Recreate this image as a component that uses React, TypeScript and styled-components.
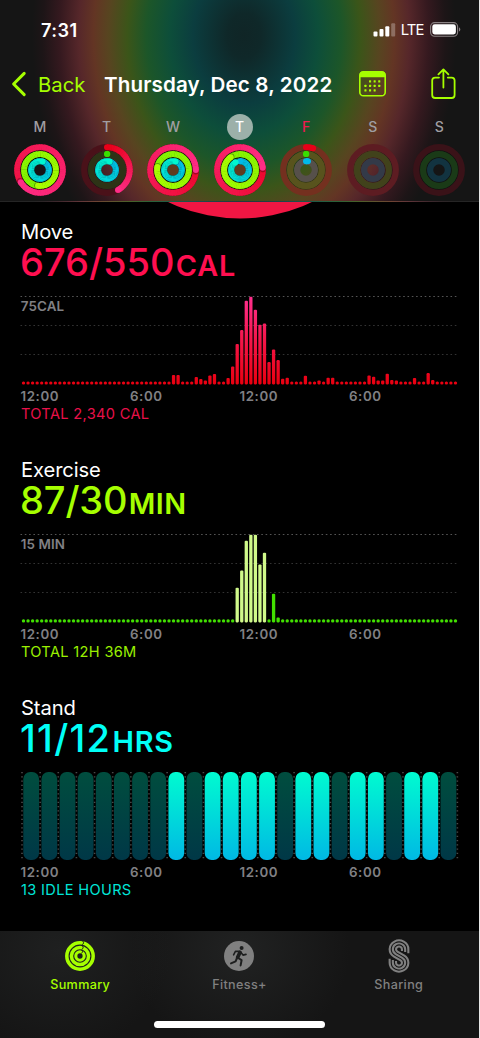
import React from 'react';
import styled, { createGlobalStyle } from 'styled-components';

const GlobalStyle = createGlobalStyle`
  * { box-sizing: border-box; }
  body { margin: 0; background: #000; font-family: Inter, "Liberation Sans", sans-serif; }
`;

const LIME = '#a6ff00';

const Screen = styled.div`
  width: 480px;
  height: 1038px;
  display: flex;
  flex-direction: column;
  overflow: hidden;
  background: #000;
  border-right: 1px solid #e6e6e6;
`;

const Header = styled.header`
  flex: none;
  height: 202px;
  border-bottom: 1px solid rgba(255, 255, 255, 0.07);
  background: radial-gradient(
    ellipse 212px 282px at 244px 36px,
    #102526 0%, #0f2829 8%, #0b3d3f 24%, #0d4e3a 35%, #1c5629 46%, #3b5519 55%,
    #574520 64%, #633524 71%, #56272a 78%, #35191f 87%, #1d1517 95%, #151515 100%
  );
`;

const StatusBar = styled.div`
  display: flex;
  align-items: center;
  height: 59px;
  padding: 0 18.5px 0 41px;
  color: #fff;
`;

const Clock = styled.span`
  flex: 1;
  font-size: 18.2px;
  font-weight: 600;
  letter-spacing: 0.4px;
`;

const Carrier = styled.span`
  margin: 0 6px 0 5px;
  font-size: 14.8px;
  letter-spacing: -0.9px;
`;

const NavBar = styled.nav`
  display: flex;
  align-items: center;
  height: 50px;
  padding-left: 11px;
`;

const BackLabel = styled.span`
  box-sizing: content-box;
  width: 66px;
  padding-left: 11px;
  font-size: 20.3px;
  letter-spacing: 0;
  color: ${LIME};
`;

const Title = styled.h1`
  margin: 0;
  width: 255px;
  font-size: 20.6px;
  font-weight: 600;
  letter-spacing: 0.13px;
  color: #fff;
  white-space: nowrap;
`;

const ShareSlot = styled.span`
  display: flex;
  margin-left: 44.5px;
`;

const Week = styled.div`
  display: grid;
  grid-template-columns: repeat(7, 66.55px);
  padding: 4.5px 0 0 6.7px;
`;

const Day = styled.div`
  display: flex;
  flex-direction: column;
  align-items: center;
  gap: 3.5px;
`;

const DayLetter = styled.span<{ $selected?: boolean; $today?: boolean }>`
  display: flex;
  align-items: center;
  justify-content: center;
  width: 26px;
  height: 26px;
  border-radius: 50%;
  font-size: 14px;
  font-weight: 500;
  background: ${(p) => (p.$selected ? '#9cb0a9' : 'transparent')};
  color: ${(p) => (p.$selected ? '#fff' : p.$today ? '#f0194f' : '#a09ea2')};
`;

const Main = styled.main`
  flex: 1;
  min-height: 0;
  overflow: hidden;
`;

const ArcStrip = styled.svg`
  display: block;
`;

const Section = styled.section`
  height: 238px;
`;

const SectionTitle = styled.h2`
  margin: 0;
  padding-left: 21px;
  font-size: 20.2px;
  line-height: 23px;
  height: 24px;
  font-weight: 400;
  letter-spacing: -0.1px;
  color: #fff;
`;

const Value = styled.div<{ $color: string; $spacing: number }>`
  padding-left: 20px;
  height: 37px;
  font-size: 38px;
  line-height: 37px;
  font-weight: 500;
  letter-spacing: ${(p) => p.$spacing}px;
  color: ${(p) => p.$color};
  white-space: nowrap;
`;

const Unit = styled.span<{ $spacing: number }>`
  margin-left: 1.2px;
  font-size: 28.8px;
  font-weight: 600;
  letter-spacing: ${(p) => p.$spacing}px;
`;

const Chart = styled.svg`
  display: block;
  font-size: 13.4px;
  font-weight: 600;
`;

const Axis = styled.div`
  display: grid;
  grid-template-columns: repeat(4, 109.5px);
  padding-left: 20.5px;
  font-size: 13.3px;
  line-height: 17px;
  height: 18px;
  font-weight: 600;
  letter-spacing: 0.6px;
  color: #808084;
`;

const Total = styled.div<{ $color: string }>`
  padding-left: 21px;
  font-size: 14.6px;
  line-height: 16px;
  letter-spacing: 0.33px;
  color: ${(p) => p.$color};
`;

const TabBar = styled.footer`
  flex: none;
  height: 107px;
  display: flex;
  flex-direction: column;
  justify-content: space-between;
  align-items: center;
  padding-bottom: 10px;
  background:
    radial-gradient(ellipse 110px 100px at 60px 20px, #1f2020, transparent),
    radial-gradient(ellipse 110px 100px at 240px 20px, #212222, transparent),
    #151515;
`;

const Tabs = styled.div`
  display: grid;
  grid-template-columns: repeat(3, 159.3px);
`;

const Tab = styled.div<{ $active?: boolean }>`
  display: flex;
  flex-direction: column;
  align-items: center;
  padding-top: 7px;
  font-size: 12.6px;
  line-height: 18px;
  font-weight: 500;
  letter-spacing: 0.35px;
  color: ${(p) => (p.$active ? LIME : '#808080')};
  svg { margin-bottom: 2px; }
`;

const HomeIndicator = styled.div`
  width: 171px;
  height: 7px;
  border-radius: 4px;
  background: #fff;
`;

type RGB = [number, number, number];
const mix = (a: RGB, b: RGB, t: number) =>
  `rgb(${a.map((v, i) => Math.round(v + (b[i] - v) * t)).join(',')})`;

const point = (r: number, turn: number) => {
  const a = turn * Math.PI * 2;
  return [27 + r * Math.sin(a), 27 - r * Math.cos(a)];
};

interface RingProps { r: number; turns: number; from: RGB; to: RGB; track: string }

function Ring({ r, turns, from, to, track }: RingProps) {
  const start = Math.max(0, turns - 1);
  const steps = Math.max(1, Math.ceil((turns - start) * 60));
  const end: RGB = turns < 0.1 ? from : to;
  const parts = Array.from({ length: steps }, (_, i) => {
    const t0 = start + ((turns - start) * i) / steps;
    const t1 = start + ((turns - start) * (i + 1)) / steps + (i < steps - 1 ? 0.004 : 0);
    const [x0, y0] = point(r, t0);
    const [x1, y1] = point(r, t1);
    return (
      <path key={i} d={`M${x0} ${y0}A${r} ${r} 0 0 1 ${x1} ${y1}`} fill="none"
        stroke={mix(from, end, turns ? t0 / turns : 0)} strokeWidth={6} />
    );
  });
  const [sx, sy] = point(r, 0);
  const [ex, ey] = point(r, turns);
  const [hx, hy] = point(r, turns + 0.01);
  return (
    <g>
      <circle cx={27} cy={27} r={r} fill="none" stroke={track} strokeWidth={6.2} />
      {turns > 0 && (
        <>
          {turns < 1 && <circle cx={sx} cy={sy} r={3} fill={mix(from, end, 0)} />}
          {parts}
          {turns >= 1 && <circle cx={hx} cy={hy} r={3} fill="rgba(0,0,0,0.3)" />}
          <circle cx={ex} cy={ey} r={3} fill={mix(from, end, 1)} />
        </>
      )}
    </g>
  );
}

interface DayData {
  letter: string; move: number; exercise: number; stand: number;
  tracks: [string, string, string]; selected?: boolean; today?: boolean;
}

const days: DayData[] = [
  { letter: 'M', move: 1.66, exercise: 2.52, stand: 1.05, tracks: ['#3d1018', '#22300f', '#0c2c33'] },
  { letter: 'T', move: 0.42, exercise: 0.003, stand: 1.05, tracks: ['#4a1119', '#2d3316', '#0c2c33'] },
  { letter: 'W', move: 1.25, exercise: 2.78, stand: 1.05, tracks: ['#4a1119', '#2d3316', '#0c2c33'] },
  { letter: 'T', move: 1.235, exercise: 2.9, stand: 0.917, tracks: ['#5a2a19', '#3d5316', '#1c4c43'], selected: true },
  { letter: 'F', move: 0.05, exercise: 0.003, stand: 0.035, tracks: ['#74301f', '#58531d', '#56504a'], today: true },
  { letter: 'S', move: 0, exercise: 0, stand: 0, tracks: ['#5d1c22', '#41421b', '#333a48'] },
  { letter: 'S', move: 0, exercise: 0, stand: 0, tracks: ['#3a1218', '#1a3a17', '#123340'] },
];

function Rings({ day }: { day: DayData }) {
  return (
    <svg width={54} height={54} viewBox="0 0 54 54">
      {day.move >= 1 && <circle cx={27} cy={27} r={20} fill="rgba(0,0,0,0.72)" />}
      {day.move >= 1 && <circle cx={27} cy={27} r={6} fill={day.letter === 'M' ? '#161416' : '#5f3b20'} />}
      <circle cx={27} cy={27} r={19.3} fill="none" stroke="rgba(10,10,10,0.5)" strokeWidth={0.9} />
      <circle cx={27} cy={27} r={12.3} fill="none" stroke="rgba(10,10,10,0.5)" strokeWidth={0.9} />
      <Ring r={22.8} turns={day.move} from={[232, 0, 24]} to={[255, 45, 135]} track={day.tracks[0]} />
      <Ring r={15.9} turns={day.exercise} from={[56, 222, 0]} to={[170, 255, 0]} track={day.tracks[1]} />
      <Ring r={8.85} turns={day.stand} from={[0, 186, 232]} to={[0, 246, 208]} track={day.tracks[2]} />
    </svg>
  );
}

const SLOTS = 96;
const PITCH = 4.547;

const series = (values: Record<number, number>, rest: number) =>
  Array.from({ length: SLOTS }, (_, i) => values[i] ?? rest);

const moveBars = series({
  33: 9.5, 34: 9.5, 38: 7.5, 39: 5.5, 40: 4, 41: 9, 42: 10.5, 45: 6.5, 46: 18, 47: 40.5,
  48: 54.3, 49: 83.7, 50: 87.7, 51: 74.7, 52: 59.7, 53: 61, 54: 22.3, 55: 35, 56: 24.3,
  57: 5.7, 58: 6.7, 62: 8.7, 65: 4, 67: 6.7, 68: 6.7, 76: 9, 77: 7.7, 78: 4, 79: 4,
  80: 10.7, 81: 4.5, 82: 3.8, 86: 6.5, 89: 11.3, 90: 4.3,
}, 3);

const exerciseBars = series({
  47: 34.7, 48: 52, 49: 81.7, 50: 87.7, 51: 87.7, 52: 58, 53: 69.7, 55: 28.7, 56: 5,
}, 3.2);

function GridLines() {
  return (
    <g strokeWidth={1} strokeDasharray="1.6 2.7">
      <line x1={20.5} x2={457} y1={15.5} y2={15.5} stroke="#555" />
      <line x1={20.5} x2={457} y1={44.5} y2={44.5} stroke="#333" />
      <line x1={20.5} x2={457} y1={73.5} y2={73.5} stroke="#333" />
    </g>
  );
}

function BarChart({ bars, label, fill }: { bars: number[]; label: string; fill: (h: number) => string }) {
  return (
    <Chart width={479} height={107} viewBox="0 0 479 107">
      <defs>
        <linearGradient id="move" gradientUnits="userSpaceOnUse" x1="0" y1="15" x2="0" y2="103">
          <stop offset="0" stopColor="#ff3090" />
          <stop offset="0.45" stopColor="#f5184f" />
          <stop offset="1" stopColor="#ea0010" />
        </linearGradient>
      </defs>
      <GridLines />
      <text x={20.8} y={29.8} fill="#808084" letterSpacing={0.1}>{label}</text>
      {bars.map((h, i) => (
        <rect key={i} x={23.5 + i * PITCH - 1.65} y={103.4 - h} width={3.3} height={h}
          rx={h < 3.5 ? 1.5 : 1.1} fill={fill(h)} />
      ))}
    </Chart>
  );
}

const STAND_PITCH = 18.14;
const standing = new Set([8, 10, 11, 12, 13, 15, 16, 18, 19, 21, 22]);

function StandChart() {
  return (
    <Chart width={479} height={107} viewBox="0 0 479 107">
      <defs>
        <linearGradient id="lit" x1="0" y1="0" x2="0" y2="1">
          <stop offset="0" stopColor="#00fbd0" />
          <stop offset="1" stopColor="#00b9e4" />
        </linearGradient>
        <linearGradient id="idle" x1="0" y1="0" x2="0" y2="1">
          <stop offset="0" stopColor="#004d3e" />
          <stop offset="1" stopColor="#003847" />
        </linearGradient>
      </defs>
      {Array.from({ length: 25 }, (_, i) => (
        <line key={i} x1={22 + i * STAND_PITCH} x2={22 + i * STAND_PITCH} y1={15} y2={103}
          stroke="#4a4a4a" strokeWidth={1.6} strokeDasharray="1.2 3.05" />
      ))}
      {Array.from({ length: 24 }, (_, i) => (
        <rect key={i} x={23.3 + i * STAND_PITCH} y={15} width={15.8} height={88} rx={7}
          fill={standing.has(i) ? 'url(#lit)' : 'url(#idle)'} />
      ))}
    </Chart>
  );
}

interface MetricProps {
  title: string; value: string; unit: string; color: string; spacing: number; unitSpacing: number;
  total: string; totalColor: string; children: React.ReactNode;
}

function Metric({ title, value, unit, color, spacing, unitSpacing, total, totalColor, children }: MetricProps) {
  return (
    <Section>
      <SectionTitle>{title}</SectionTitle>
      <Value $color={color} $spacing={spacing}>{value}<Unit $spacing={unitSpacing}>{unit}</Unit></Value>
      {children}
      <Axis><span>12:00</span><span>6:00</span><span>12:00</span><span>6:00</span></Axis>
      <Total $color={totalColor}>{total}</Total>
    </Section>
  );
}

function StatusIcons() {
  return (
    <svg width={23} height={16} viewBox="0 0 23 16" fill="#fff">
      <rect x={0.5} y={9.5} width={4} height={5} rx={1} />
      <rect x={6.5} y={7} width={4} height={7.5} rx={1} />
      <rect x={12.3} y={4.2} width={4} height={10.3} rx={1} />
      <rect x={18.2} y={1.2} width={4} height={13.3} rx={1} opacity={0.28} />
    </svg>
  );
}

function Battery() {
  return (
    <svg width={31} height={15} viewBox="0 0 31 15">
      <rect x={0.6} y={0.6} width={27} height={13.6} rx={4} fill="none" stroke="#8a8284" strokeWidth={1.1} />
      <rect x={2.3} y={2.3} width={23.6} height={10.2} rx={2.4} fill="#fff" />
      <path d="M29 5.2c1.8.7 1.8 3.7 0 4.4z" fill="#8a8284" />
    </svg>
  );
}

function CalendarIcon() {
  const dots = [[11, 10.3], [15.6, 10.3], [20.2, 10.3], [6.4, 14.8], [11, 14.8], [15.6, 14.8], [20.2, 14.8], [6.4, 19.3], [11, 19.3], [15.6, 19.3]];
  return (
    <svg width={27} height={26} viewBox="0 0 27 26" fill={LIME}>
      <rect x={0.8} y={0.8} width={25.4} height={24} rx={3.6} fill="none" stroke={LIME} strokeWidth={1.6} />
      <path d="M0.5 6.3V4A3.6 3.6 0 0 1 4 .4H23A3.6 3.6 0 0 1 26.6 4V6.3Z" />
      {dots.map(([x, y], i) => <rect key={i} x={x - 1} y={y - 1} width={2.1} height={2.1} rx={0.5} />)}
    </svg>
  );
}

function ShareIcon() {
  return (
    <svg width={25} height={33} viewBox="0 0 25 33" fill="none" stroke={LIME} strokeWidth={1.8} strokeLinecap="round" strokeLinejoin="round">
      <path d="M8 9.6H4.2A3 3 0 0 0 1.2 12.6V27A3 3 0 0 0 4.2 30H20.6A3 3 0 0 0 23.6 27V12.6A3 3 0 0 0 20.6 9.6H16.8" />
      <path d="M12.4 19.6V1.6M7.4 6.4L12.4 1.4L17.4 6.4" />
    </svg>
  );
}

function SummaryIcon() {
  return (
    <svg width={34} height={36} viewBox="-17 -18 34 36" fill="none" stroke={LIME} strokeWidth={3.5} strokeLinecap="round">
      <circle r={13.2} />
      <circle r={8.6} />
      <circle r={4.2} strokeWidth={3.1} />
      <g stroke="#1c1d1d" strokeWidth={1} strokeLinecap="butt">
        <path d="M2.2-15.2A2 2 0 0 1 2.2-11.4M1.8-10.6A2 2 0 0 1 1.8-6.8M1.4-6A1.7 1.7 0 0 1 1.4-2.8" />
      </g>
    </svg>
  );
}

function FitnessIcon() {
  return (
    <svg width={34} height={36} viewBox="-17 -18 34 36">
      <circle r={15} fill="#808080" />
      <g fill="none" stroke="#1d1e1e" strokeLinecap="round" strokeLinejoin="round">
        <circle cx={2.6} cy={-8} r={2} fill="#1d1e1e" stroke="none" />
        <path d="M1-3.6L-1.4 1.4" strokeWidth={3.6} />
        <path d="M.8-4.8L-3.6-4.6L-5.4-1.2M1.6-4L4-.9L7-1.6" strokeWidth={1.6} />
        <path d="M-.8 2L2.6 4.2L1.6 9.4M-2 1.8L-3.4 5.4L-8 7.4" strokeWidth={2} />
      </g>
    </svg>
  );
}

function SharingIcon() {
  const c = 6.6;
  const strand = (r: number) => {
    const q = 11.2 - r;
    const tail = (n: number) => 0.6 + n * 0.38;
    return `M${r} ${-c + tail(r)}V${-c}A${r} ${r} 0 1 0 ${-0.53 * r} ${-c + 0.848 * r}` +
      `L${0.53 * q} ${c - 0.848 * q}A${q} ${q} 0 1 1 ${-q} ${c}V${c - tail(q)}`;
  };
  return (
    <svg width={34} height={36} viewBox="-17 -18 34 36" fill="none" stroke="#808080" strokeWidth={1.9}>
      <g transform="scale(1.1 1.03)">
        {[2.7, 5.6, 8.5].map((r) => <path key={r} d={strand(r)} />)}
      </g>
    </svg>
  );
}

export default function App() {
  return (
    <Screen>
      <GlobalStyle />
      <Header>
        <StatusBar>
          <Clock>7:31</Clock>
          <StatusIcons />
          <Carrier>LTE</Carrier>
          <Battery />
        </StatusBar>
        <NavBar>
          <svg width={16} height={26} viewBox="0 0 16 26" fill="none" stroke={LIME} strokeWidth={3} strokeLinecap="round" strokeLinejoin="round">
            <path d="M13.2 2.4L2.6 13L13.2 23.6" />
          </svg>
          <BackLabel>Back</BackLabel>
          <Title>Thursday, Dec 8, 2022</Title>
          <CalendarIcon />
          <ShareSlot><ShareIcon /></ShareSlot>
        </NavBar>
        <Week>
          {days.map((d, i) => (
            <Day key={i}>
              <DayLetter $selected={d.selected} $today={d.today}>{d.letter}</DayLetter>
              <Rings day={d} />
            </Day>
          ))}
        </Week>
      </Header>
      <Main>
        <ArcStrip width={479} height={18} viewBox="0 0 479 18">
          <circle cx={240} cy={-148.5} r={165} fill="#f01643" />
        </ArcStrip>
        <Metric title="Move" value="676/550" unit="CAL" color="#ff0f50" spacing={0} unitSpacing={0.9}
          total="TOTAL 2,340 CAL" totalColor="#e8104a">
          <BarChart bars={moveBars} label="75CAL" fill={() => 'url(#move)'} />
        </Metric>
        <Metric title="Exercise" value="87/30" unit="MIN" color={LIME} spacing={-0.1} unitSpacing={0.5}
          total="TOTAL 12H 36M" totalColor="#9af000">
          <BarChart bars={exerciseBars} label="15 MIN" fill={(h) => (h > 30 ? '#d0f98a' : '#42e000')} />
        </Metric>
        <Metric title="Stand" value="11/12" unit="HRS" color="#00fff6" spacing={1.3} unitSpacing={0.8}
          total="13 IDLE HOURS" totalColor="#00e5d8">
          <StandChart />
        </Metric>
      </Main>
      <TabBar>
        <Tabs>
          <Tab $active><SummaryIcon />Summary</Tab>
          <Tab><FitnessIcon />Fitness+</Tab>
          <Tab><SharingIcon />Sharing</Tab>
        </Tabs>
        <HomeIndicator />
      </TabBar>
    </Screen>
  );
}
